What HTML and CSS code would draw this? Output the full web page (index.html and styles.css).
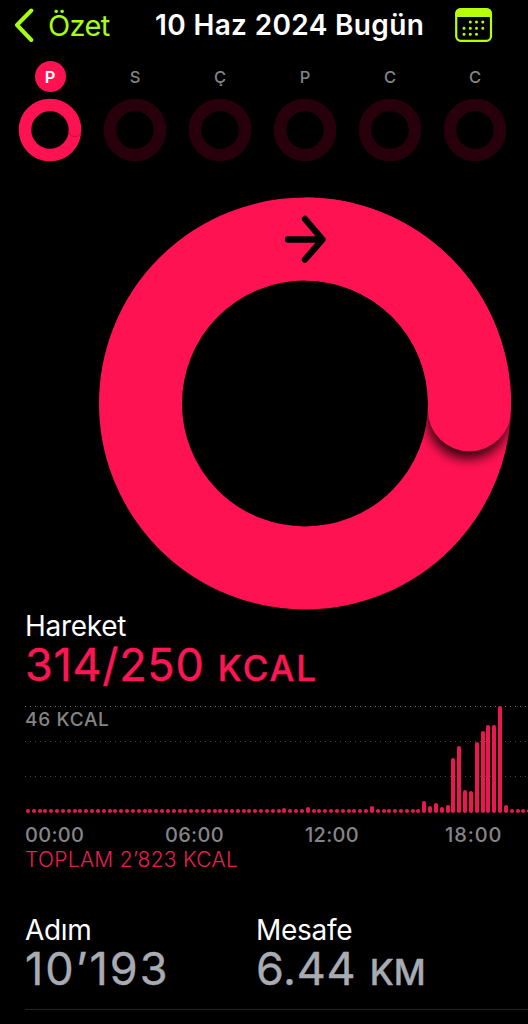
FILE: index.html
```html
<!DOCTYPE html>
<html lang="tr">
<head>
    <meta charset="UTF-8">
    <title>Özet</title>
    <link rel="stylesheet" href="styles.css">
</head>
<body>
    <header class="top-bar">
        <svg class="back-icon" width="22" height="36" viewBox="0 0 22 36">
            <path d="M19.3 3.5 L5 18 L19.3 33" />
        </svg>
        <span class="back-text">Özet</span>
        <h1>10 Haz 2024 Bugün</h1>
        <svg class="calendar-icon" width="38" height="34" viewBox="0 0 38 34">
            <rect class="calendar-frame" x="1.2" y="1.2" width="34.8" height="31.6" rx="4.5" />
            <path class="calendar-fill" d="M0.5 9 V5.5 Q0.5 0.5 5.5 0.5 H31.7 Q36.7 0.5 36.7 5.5 V9 Z" />
            <path class="calendar-dots" d="M15.3 14h0M21.5 14h0M27.8 14h0M9 20.3h0M15.3 20.3h0M21.5 20.3h0M27.8 20.3h0M9 26.3h0M15.3 26.3h0M21.5 26.3h0" />
        </svg>
    </header>

    <div class="week">
        <div class="day active">
            <span>P</span>
            <svg width="64" height="64" viewBox="0 0 64 64">
                <circle cx="32" cy="32" r="25" />
                <path class="small-end" d="M51 34 a6.2 6.2 0 0 0 12 0" />
            </svg>
        </div>
        <div class="day"><span>S</span><svg width="64" height="64" viewBox="0 0 64 64"><circle cx="32" cy="32" r="25" /></svg></div>
        <div class="day"><span>Ç</span><svg width="64" height="64" viewBox="0 0 64 64"><circle cx="32" cy="32" r="25" /></svg></div>
        <div class="day"><span>P</span><svg width="64" height="64" viewBox="0 0 64 64"><circle cx="32" cy="32" r="25" /></svg></div>
        <div class="day"><span>C</span><svg width="64" height="64" viewBox="0 0 64 64"><circle cx="32" cy="32" r="25" /></svg></div>
        <div class="day"><span>C</span><svg width="64" height="64" viewBox="0 0 64 64"><circle cx="32" cy="32" r="25" /></svg></div>
    </div>

    <svg class="ring" width="414" height="414" viewBox="0 0 414 414">
        <defs>
            <clipPath id="ringClip">
                <path clip-rule="evenodd" d="M207 1 a206 206 0 0 1 0 412 a206 206 0 0 1 0 -412 Z M207 84 a123 123 0 0 0 0 246 a123 123 0 0 0 0 -246 Z" />
            </clipPath>
            <filter id="blur" x="-30%" y="-30%" width="160%" height="160%">
                <feGaussianBlur stdDeviation="6" />
            </filter>
        </defs>
        <circle class="ring-line" cx="207" cy="206.5" r="164.5" />
        <g clip-path="url(#ringClip)">
            <circle class="ring-shadow" cx="370" cy="221" r="41" filter="url(#blur)" />
        </g>
        <path class="ring-line" d="M207 42 A164.5 164.5 0 0 1 371.5 206.5" />
        <circle class="ring-cap" cx="371.4" cy="213" r="41.5" />
        <rect class="ring-cap" x="330.2" y="198" width="82.6" height="14" />
        <path class="arrow" d="M190 42.5 H224 M207 22 L224.5 42.5 L207 62.5" />
    </svg>

    <section class="move">
        <h2>Hareket</h2>
        <div class="value">314/250 <small>KCAL</small></div>
        <div class="chart">
            <span class="chart-max">46 KCAL</span>
            <div class="bars" id="bars"></div>
        </div>
        <div class="hours">
            <span>00:00</span>
            <span>06:00</span>
            <span>12:00</span>
            <span>18:00</span>
        </div>
        <div class="total">TOPLAM 2’823 KCAL</div>
    </section>

    <section class="stats">
        <div class="stat">
            <h2>Adım</h2>
            <div class="value steps">10’193</div>
        </div>
        <div class="stat">
            <h2>Mesafe</h2>
            <div class="value">6.44 <small>KM</small></div>
        </div>
    </section>

    <script>
        // one bar for every 15 minutes, only the busy ones are listed
        const heights = {
            44: 5, 48: 6, 59: 7, 68: 12, 69: 7, 70: 10, 71: 6, 72: 8,
            73: 55, 74: 67, 75: 23, 76: 22, 77: 71, 78: 82, 79: 88, 80: 88, 81: 107, 82: 8
        };
        const bars = document.getElementById('bars');

        // the day goes on past the edge of the screen, 87 bars fit
        for (let i = 0; i < 87; i++) {
            const bar = document.createElement('div');
            bar.className = 'bar';
            bar.style.height = (heights[i] || 4) + 'px';
            bars.appendChild(bar);
        }
    </script>
</body>
</html>
```
FILE: styles.css
```css
* {
    box-sizing: border-box;
}

body {
    margin: 0;
    height: 1024px;
    background: #000;
    color: #fff;
    font-family: Inter, 'Liberation Sans', sans-serif;
    overflow: hidden;
}

svg {
    display: block;
    flex: none;
}

h1, h2 {
    margin: 0;
    white-space: nowrap;
}

.top-bar {
    display: flex;
    align-items: center;
    height: 50px;
    padding-left: 12px;
}

.back-icon path {
    fill: none;
    stroke: #a6ff12;
    stroke-width: 4;
    stroke-linecap: round;
    stroke-linejoin: round;
}

.back-text {
    width: 107px;
    margin-left: 14px;
    font-size: 29px;
    font-weight: 400;
    letter-spacing: -0.6px;
    color: #a6ff12;
}

h1 {
    width: 300px;
    font-size: 28px;
    font-weight: 600;
    letter-spacing: 0.35px;
}

.calendar-frame {
    fill: none;
    stroke: #b4ff0a;
    stroke-width: 2.2;
}

.calendar-fill {
    fill: #b4ff0a;
}

.calendar-dots {
    stroke: #b4ff0a;
    stroke-width: 3;
    stroke-linecap: round;
}

.week {
    display: flex;
    gap: 21px;
    padding: 11px 0 0 18px;
}

.day {
    display: flex;
    flex-direction: column;
    align-items: center;
    width: 64px;
    gap: 6px;
}

.day span {
    width: 31px;
    height: 31px;
    line-height: 32px;
    border-radius: 50%;
    text-align: center;
    font-size: 16.5px;
    font-weight: 500;
    color: #858585;
}

.day circle {
    fill: none;
    stroke: #28000b;
    stroke-width: 12.6;
}

.day.active span {
    background: #ff1252;
    color: #fff;
    font-weight: 600;
}

.day.active circle {
    stroke: #ff1252;
}

.small-end {
    fill: none;
    stroke: #c40d3d;
    stroke-width: 1;
}

.ring {
    margin: 35px 0 0 98px;
}

.ring-line {
    fill: none;
    stroke: #ff1252;
    stroke-width: 83;
}

.ring-shadow {
    fill: #000;
    opacity: 0.8;
}

.ring-cap {
    fill: #ff1252;
}

.arrow {
    fill: none;
    stroke: #000;
    stroke-width: 6.4;
    stroke-linecap: round;
    stroke-linejoin: round;
}

.move {
    padding-left: 25px;
}

h2 {
    height: 30px;
    line-height: 30px;
    font-size: 28px;
    font-weight: 400;
    letter-spacing: -0.3px;
}

.value {
    height: 50px;
    line-height: 48px;
    font-size: 45px;
    letter-spacing: 0.7px;
    white-space: nowrap;
    color: #fc1754;
    -webkit-text-stroke: 0.4px;
}

.value small {
    font-size: 35px;
    font-weight: 500;
    letter-spacing: 2px;
}

.chart {
    position: relative;
    height: 107px;
    margin-top: 15px;
    background-image: linear-gradient(90deg, #777 1px, transparent 1px), linear-gradient(90deg, #444 1px, transparent 1px), linear-gradient(90deg, #444 1px, transparent 1px);
    background-size: 5px 1px;
    background-repeat: repeat-x;
    background-position: 0 0, 0 35px, 0 70px;
    overflow: hidden;
}

.chart-max {
    display: block;
    padding-top: 3px;
    line-height: 22px;
    font-size: 19px;
    font-weight: 500;
    letter-spacing: 0.7px;
    color: #858585;
}

.bars {
    position: absolute;
    left: 1px;
    bottom: 0;
    display: flex;
    align-items: flex-end;
    gap: 1.83px;
}

.bar {
    width: 4px;
    border-radius: 2px;
    background: #eb1850;
}

.hours {
    display: flex;
    height: 34px;
    padding-top: 10px;
}

.hours span {
    width: 140px;
    flex: none;
    line-height: 24px;
    font-size: 20px;
    font-weight: 500;
    letter-spacing: 0.3px;
    color: #858588;
}

.hours span:last-child {
    width: 80px;
    letter-spacing: 0.9px;
}

.total {
    line-height: 26px;
    font-size: 21px;
    font-weight: 300;
    letter-spacing: 0.3px;
    color: #e81f56;
}

.stats {
    display: flex;
    height: 95px;
    margin: 42px 0 0 25px;
    border-bottom: 1px solid #222;
}

.stat {
    width: 231px;
}

.stats .value {
    color: #a9abb3;
}

.stats .value small {
    letter-spacing: 0;
}

.value.steps {
    letter-spacing: 2px;
}
```
